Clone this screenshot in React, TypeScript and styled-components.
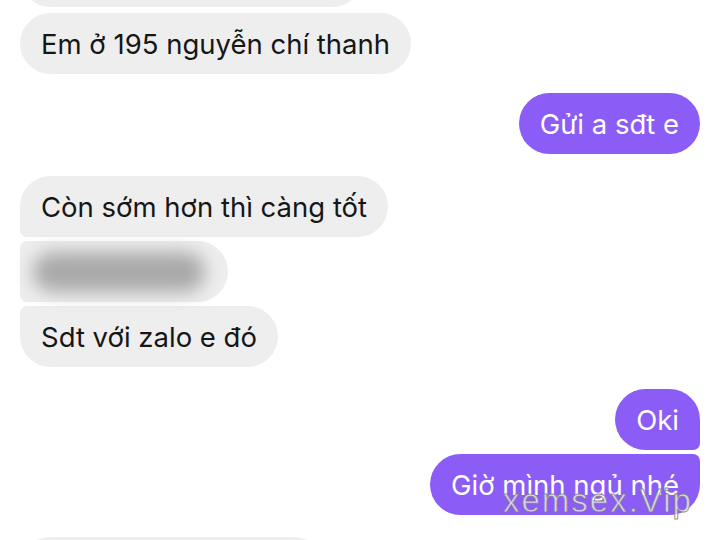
import styled, { createGlobalStyle, css } from "styled-components";

type Side = "in" | "out";
type Corner = "solo" | "first" | "middle" | "last";

type Message = {
  id: number;
  side: Side;
  corner: Corner;
  text?: string;
  hidden?: boolean;
  gap: number;
};

const GlobalStyle = createGlobalStyle`
  html, body {
    margin: 0;
    padding: 0;
    background: #ffffff;
    overflow: hidden;
  }
  body {
    font-family: Inter, "Noto Sans", sans-serif;
  }
`;

const Screen = styled.div`
  position: relative;
  width: 720px;
  height: 540px;
  overflow: hidden;
  background: #ffffff;
`;

const Thread = styled.div`
  display: flex;
  flex-direction: column;
  padding: 0 20px;
  margin-top: -54px;
`;

const Row = styled.div<{ $side: Side; $gap: number }>`
  display: flex;
  justify-content: ${(p) => (p.$side === "out" ? "flex-end" : "flex-start")};
  margin-top: ${(p) => p.$gap}px;
`;

const big = 31;
const small = 7;

const cornerFor = (side: Side, corner: Corner) => {
  const top = corner === "middle" || corner === "last" ? small : big;
  const bottom = corner === "first" || corner === "middle" ? small : big;
  if (side === "in") {
    return css`
      border-radius: ${top}px ${big}px ${big}px ${bottom}px;
    `;
  }
  return css`
    border-radius: ${big}px ${top}px ${bottom}px ${big}px;
  `;
};

const Bubble = styled.div<{ $side: Side; $corner: Corner; $ghost?: boolean }>`
  box-sizing: border-box;
  height: 61px;
  display: flex;
  align-items: center;
  padding: 0 21px;
  font-size: 27.5px;
  white-space: nowrap;
  background: ${(p) => (p.$side === "out" ? "#8b5cf6" : "#eeeeee")};
  color: ${(p) => (p.$ghost ? "transparent" : p.$side === "out" ? "#ffffff" : "#161616")};
  ${(p) => cornerFor(p.$side, p.$corner)}
`;

const Redacted = styled.div`
  width: 172px;
  height: 40px;
  margin-left: -8px;
  border-radius: 20px;
  background: #a9a9a9;
  filter: blur(9px);
`;

const Watermark = styled.div`
  position: absolute;
  left: 503px;
  top: 484px;
  font-family: "Liberation Sans", Arial, sans-serif;
  font-size: 33px;
  line-height: 1;
  letter-spacing: 2px;
  color: rgba(255, 255, 255, 0.72);
  -webkit-text-stroke: 1px rgba(125, 125, 125, 0.85);
  pointer-events: none;
`;

const messages: Message[] = [
  { id: 0, side: "in", corner: "solo", text: "Anh ở đâu vậy, em qua đón", gap: 0 },
  { id: 1, side: "in", corner: "solo", text: "Em ở 195 nguyễn chí thanh", gap: 6 },
  { id: 2, side: "out", corner: "solo", text: "Gửi a sđt e", gap: 19 },
  { id: 3, side: "in", corner: "first", text: "Còn sớm hơn thì càng tốt", gap: 22 },
  { id: 4, side: "in", corner: "middle", hidden: true, gap: 4 },
  { id: 5, side: "in", corner: "last", text: "Sdt với zalo e đó", gap: 4 },
  { id: 6, side: "out", corner: "first", text: "Oki", gap: 22 },
  { id: 7, side: "out", corner: "last", text: "Giờ mình ngủ nhé", gap: 4 },
  { id: 8, side: "in", corner: "solo", text: "Ừ ngủ ngon nha anh", gap: 22 },
];

const App = () => {
  return (
    <Screen>
      <GlobalStyle />
      <Thread>
        {messages.map((m) => (
          <Row key={m.id} $side={m.side} $gap={m.gap}>
            <Bubble
              $side={m.side}
              $corner={m.corner}
              $ghost={m.id === 0}
              style={m.hidden ? { width: 208 } : m.id === 0 ? { width: 343 } : undefined}
            >
              {m.hidden ? <Redacted /> : m.text}
            </Bubble>
          </Row>
        ))}
      </Thread>
      <Watermark>xemsex.Vip</Watermark>
    </Screen>
  );
};

export default App;
